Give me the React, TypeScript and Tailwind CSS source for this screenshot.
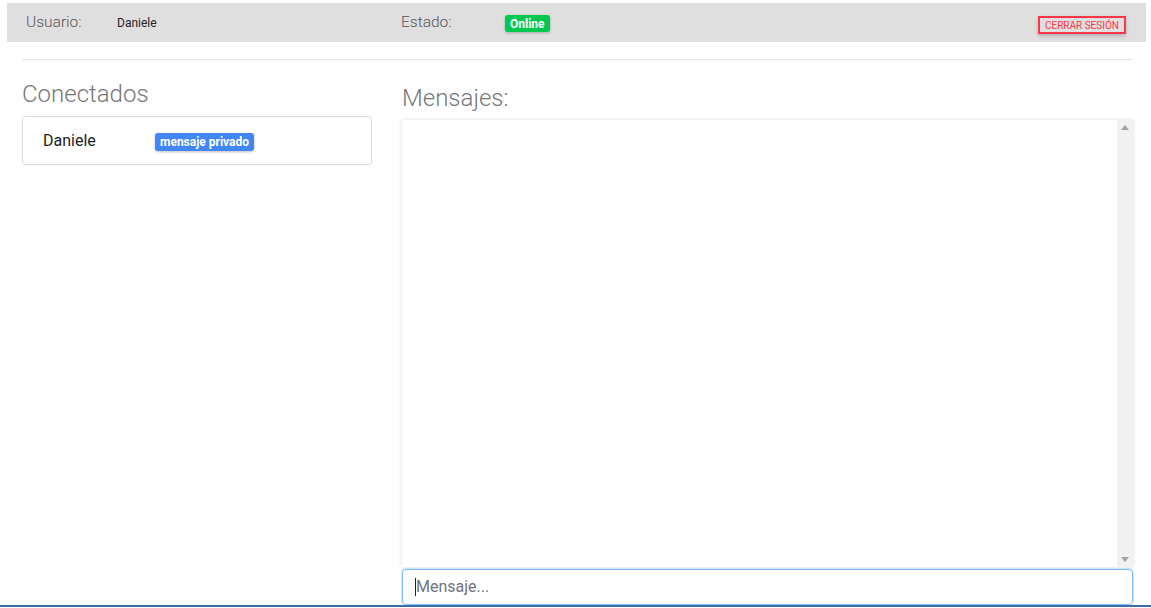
import React from "react";

export default function App() {
  return (
    <div className="w-[1151px] h-[608px] overflow-hidden bg-white font-['Roboto','Liberation_Sans',sans-serif] flex flex-col">
      {/* Top bar */}
      <div className="pt-[3px] pl-[7px] pr-[5px]">
        <div className="h-[39px] bg-[#dfdfdf] flex items-center pl-[19px] pr-[20px]">
          <div className="w-[375px] flex items-center">
            <span className="text-[15.5px] font-light text-[#555] w-[91px]">Usuario:</span>
            <span className="text-[12px] text-[#222]">Daniele</span>
          </div>
          <div className="flex items-center">
            <span className="text-[15.5px] font-light text-[#555] w-[104px]">Estado:</span>
            <span className="mt-[2px] h-[17px] px-[5px] flex items-center rounded-[3px] bg-[#00c851] text-white text-[12px] font-bold shadow-[0_1px_3px_rgba(0,0,0,0.25)]">
              Online
            </span>
          </div>
          <div className="ml-auto mt-[5px]">
            <button className="h-[18px] w-[88px] border-2 border-[#ff3547] text-[#ff3547] text-[10px] uppercase flex items-center justify-center shadow-[0_2px_4px_rgba(0,0,0,0.2)]">
              Cerrar sesión
            </button>
          </div>
        </div>
      </div>

      {/* Divider */}
      <div className="mt-[17px] ml-[22px] mr-[18px] h-px bg-[#e6e6e6]" />

      {/* Content */}
      <div className="flex-1 flex pl-[22px] pr-[18px] gap-[30px] min-h-0">
        <div className="w-[350px] shrink-0">
          <h2 className="mt-[20px] text-[24px] leading-[29px] font-light text-[#777]">Conectados</h2>
          <div className="mt-[7px] h-[49px] border border-[#dcdcdc] rounded-[3px] flex items-center pl-[20px]">
            <span className="w-[112px] text-[16px] text-[#222]">Daniele</span>
            <span className="mt-[2px] h-[18px] px-[5px] flex items-center rounded-[3px] bg-[#4285f4] text-white text-[12px] font-bold shadow-[0_1px_3px_rgba(0,0,0,0.25)]">
              mensaje privado
            </span>
          </div>
        </div>

        <div className="flex-1 flex flex-col">
          <h2 className="mt-[24px] text-[24px] leading-[29px] font-light text-[#777]">Mensajes:</h2>
          <div className="mt-[7px] h-[447px] flex bg-white shadow-[0_0_4px_rgba(0,0,0,0.15)]">
            <div className="flex-1" />
            <div className="w-[16px] bg-[#f1f1f1] flex flex-col items-center justify-between py-[5px]">
              <svg width="8" height="5" viewBox="0 0 8 5">
                <path d="M4 0 L8 5 L0 5 Z" fill="#a3a3a3" />
              </svg>
              <svg width="8" height="5" viewBox="0 0 8 5">
                <path d="M0 0 L8 0 L4 5 Z" fill="#a3a3a3" />
              </svg>
            </div>
          </div>
          <div className="mt-[2px] h-[36px] w-[731px] border border-[#80bdff] rounded-[4px] shadow-[0_0_0_1px_rgba(128,189,255,0.35)] flex items-center pl-[12px]">
            <span className="w-px h-[18px] bg-[#222]" />
            <span className="text-[16px] text-[#6c757d]">Mensaje...</span>
          </div>
        </div>
      </div>

      {/* Bottom line */}
      <div className="h-[2px] bg-[#3b6ea5]" />
      <div className="h-px" />
    </div>
  );
}
